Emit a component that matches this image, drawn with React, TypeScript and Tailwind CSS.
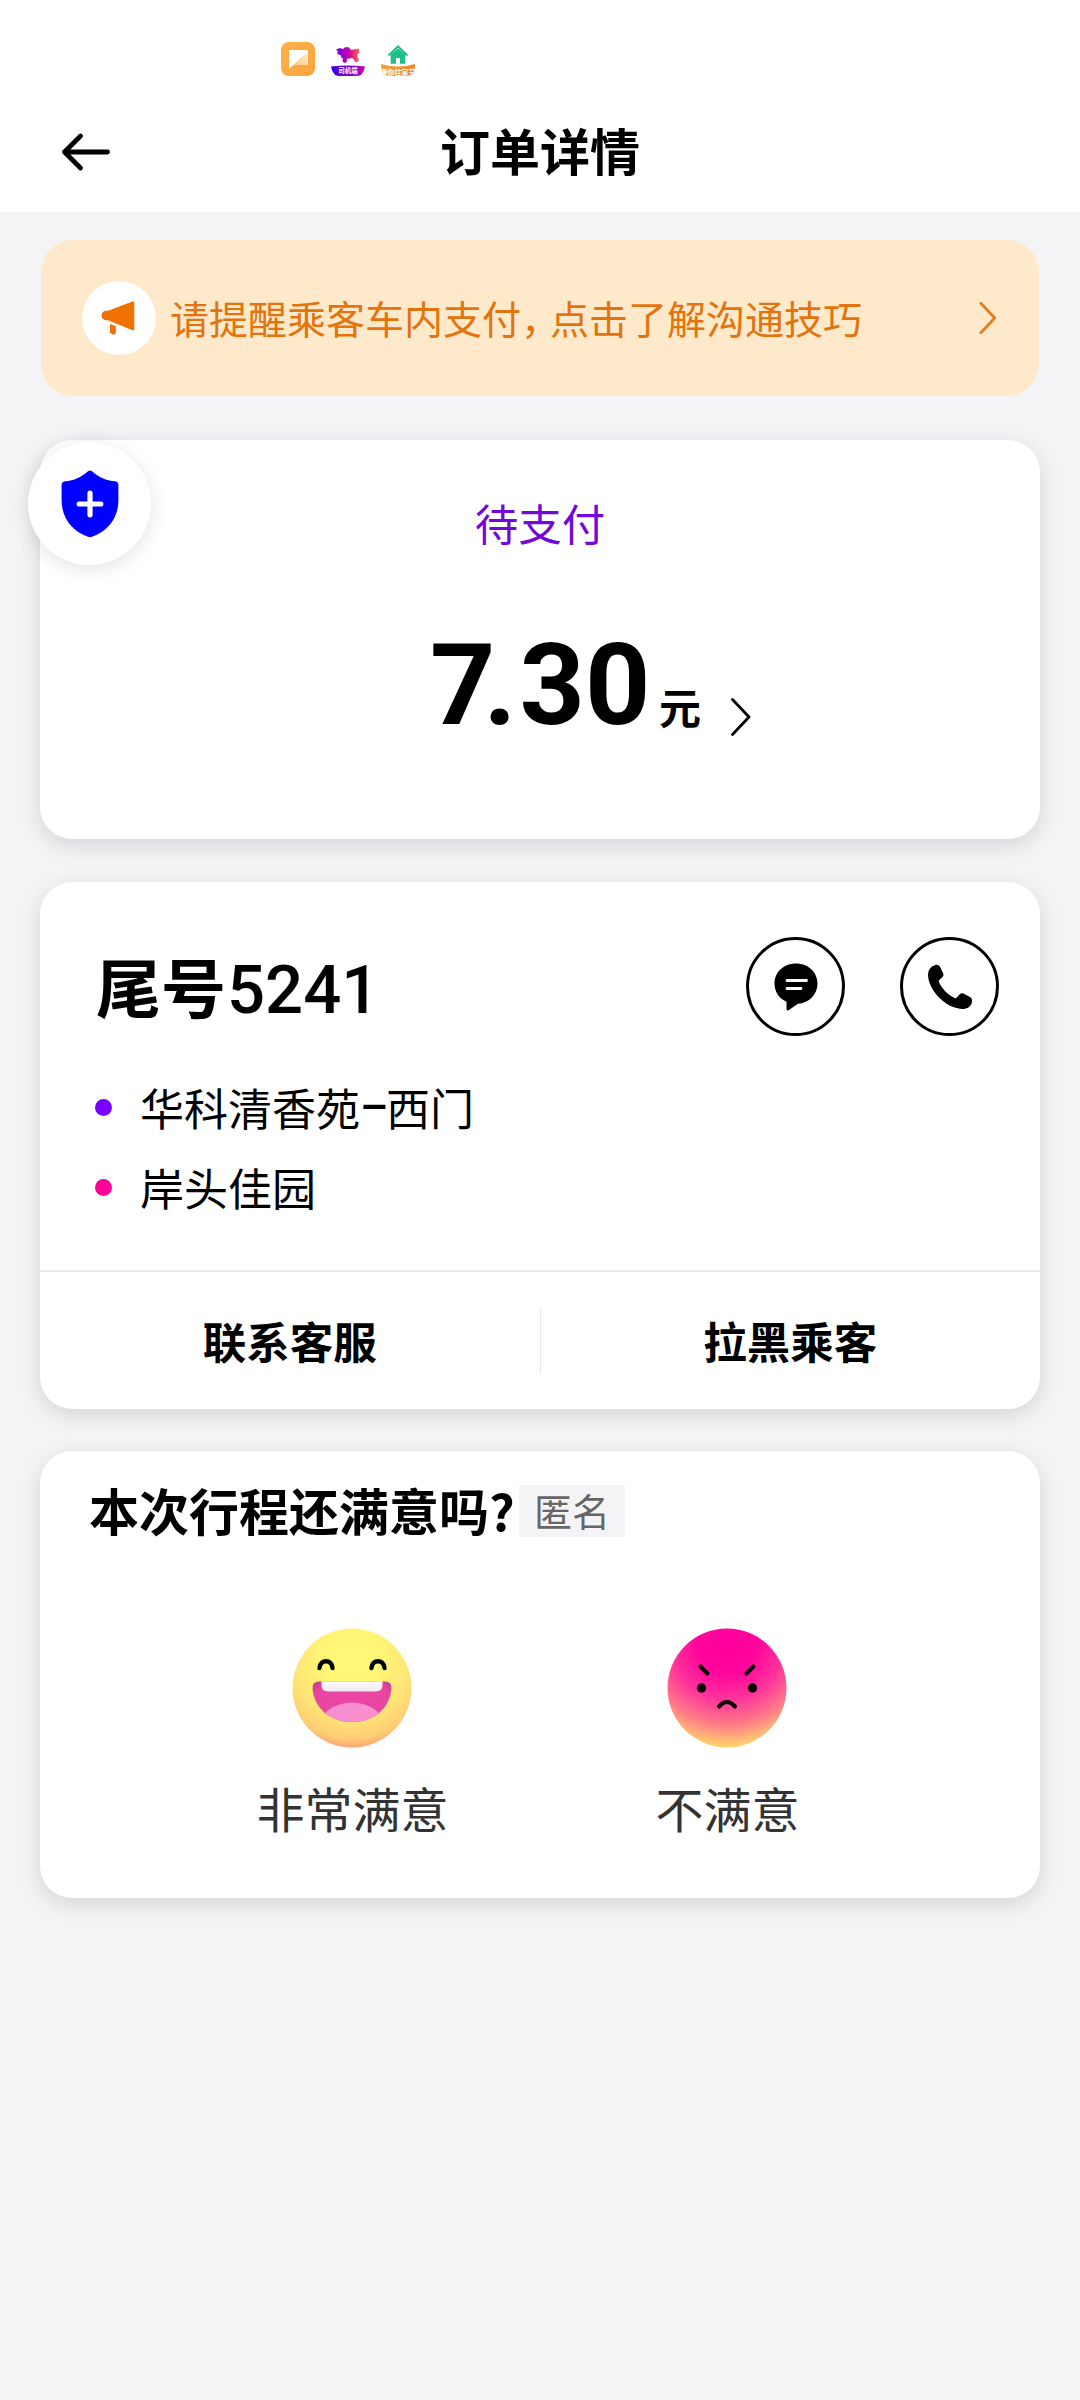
import React from "react";

const CHEVRON = "M1.5 1.5 L18 19 L1.5 36.5";

function Shield() {
  return (
    <svg width="58" height="68" viewBox="0 0 58 68" className="block">
      <path
        d="M27 1.2 Q29 -.4 31 1.2 C38 7.5 45 10.5 54 11.3 Q57.4 11.7 57.4 15 V30 C57.4 48 47 61 31 66.8 Q29 67.5 27 66.8 C11 61 .6 48 .6 30 V15 Q.6 11.7 4 11.3 C13 10.5 20 7.5 27 1.2Z"
        fill="#0000ff"
      />
      <path d="M29 23.2 V44.8 M18.2 34 H39.8" stroke="#fff" strokeWidth="5.2" strokeLinecap="round" />
    </svg>
  );
}

function StatusIcons() {
  return (
    <div className="flex h-[92px] gap-4 pt-[42px] pl-[281px]">
      <svg width="34" height="34" viewBox="0 0 34 34">
        <defs>
          <linearGradient id="note" x1="0" y1="0" x2="1" y2="1">
            <stop offset="0" stopColor="#fdb04a" />
            <stop offset="1" stopColor="#fba43c" />
          </linearGradient>
          <linearGradient id="noteFold" x1="0" y1="1" x2="1" y2="0">
            <stop offset="0" stopColor="#fdc880" />
            <stop offset="1" stopColor="#fff0da" />
          </linearGradient>
        </defs>
        <rect width="34" height="34" rx="8" fill="url(#note)" />
        <path d="M9.500 8 H25.500 Q27 8 27 9.500 V9.700 L8.200 27 V9.300 Q8.200 8 9.500 8Z" fill="#fff" />
        <path d="M27 9.700 V21.500 Q27 23 25.500 23 H12.500 Z" fill="url(#noteFold)" />
      </svg>
      <svg width="34" height="34" viewBox="0 0 34 34">
        <defs>
          <linearGradient id="horse" x1="0" y1="0" x2="1" y2="0">
            <stop offset="0" stopColor="#6a00f4" />
            <stop offset=".6" stopColor="#d3089a" />
            <stop offset="1" stopColor="#ff6a4a" />
          </linearGradient>
          <linearGradient id="band" x1="0" y1="0" x2="1" y2="0">
            <stop offset="0" stopColor="#3200e6" />
            <stop offset="1" stopColor="#c400b4" />
          </linearGradient>
        </defs>
        <path
          d="M5 7.500 L9 6 L12 7 L14 5.200 L18 5.200 L20 8 L28 6.500 L28.500 11 L26.500 12 L26.500 15.500 A2.400 2.400 0 1 1 23 17.500 L21 16 L15.500 17 A2.300 2.300 0 1 1 11.500 18.500 L12 16.500 L10.500 16 L9.500 13 L6 12 L7 9.500Z"
          fill="url(#horse)"
        />
        <path d="M0 24.500 Q17 22.500 34 24.500 Q33.500 29 30 33 Q28 34 25 34 H9 Q6 34 4 33 Q.5 29 0 24.500Z" fill="url(#band)" />
        <text x="17" y="31" fontSize="6.500" fontWeight="700" textAnchor="middle" fill="#fff">司机端</text>
      </svg>
      <svg width="34" height="34" viewBox="0 0 34 34">
        <defs>
          <linearGradient id="wave" x1="0" y1="0" x2="1" y2="0">
            <stop offset="0" stopColor="#f5a43a" />
            <stop offset="1" stopColor="#e8862e" />
          </linearGradient>
        </defs>
        <path d="M17 6.500 L24.300 12.500 V21.800 H19 V16 H15 V21.800 H9.700 V12.500Z" fill="#1dbf8a" />
        <path d="M7.500 13.500 L17 4.500 L26.500 13.500" fill="none" stroke="#1dbf8a" strokeWidth="2" />
        <path d="M0 22 Q17 27 34 22 Q34.500 34 26 34 H8 Q-.5 34 0 22Z" fill="url(#wave)" />
        <text x="17" y="32.500" fontSize="7" fontWeight="700" textAnchor="middle" fill="#fff">便你住家节</text>
      </svg>
    </div>
  );
}

function HappyFace() {
  return (
    <svg width="120" height="120" viewBox="0 0 120 120" className="mr-px block">
      <defs>
        <radialGradient id="happy" cx=".5" cy=".27" r=".75">
          <stop offset="0" stopColor="#fffb78" />
          <stop offset=".35" stopColor="#fff575" />
          <stop offset=".65" stopColor="#ffe576" />
          <stop offset=".88" stopColor="#fecc74" />
          <stop offset="1" stopColor="#ff9a72" />
        </radialGradient>
        <linearGradient id="teeth" x1="0" y1="0" x2="0" y2="1">
          <stop offset="0" stopColor="#fff" />
          <stop offset="1" stopColor="#eee6f2" />
        </linearGradient>
        <radialGradient id="mouth" cx=".5" cy=".4" r=".6">
          <stop offset="0" stopColor="#ee46a6" />
          <stop offset=".75" stopColor="#e8459f" />
          <stop offset="1" stopColor="#c83a8e" />
        </radialGradient>
        <clipPath id="mouthClip">
          <path d="M27 53.500 H93 Q99.500 53.500 99.500 60 C98 81 81 94 60 94 C39 94 22 81 20.500 60 Q20.500 53.500 27 53.500Z" />
        </clipPath>
      </defs>
      <circle cx="60" cy="60" r="59.500" fill="url(#happy)" />
      <path d="M27.500 40 C28 31 40 31 40.500 40 M79.500 40 C80 31 92 31 92.500 40" fill="none" stroke="#000" strokeWidth="4.400" strokeLinecap="round" />
      <g clipPath="url(#mouthClip)">
        <rect x="20" y="53" width="80" height="42" fill="url(#mouth)" />
        <ellipse cx="60" cy="96" rx="31" ry="21.500" fill="#f98fd0" />
        <path d="M29.500 53 H90.500 V57 Q90.500 63.500 84 63.500 H36 Q29.500 63.500 29.500 57Z" fill="url(#teeth)" />
      </g>
    </svg>
  );
}

function AngryFace() {
  return (
    <svg width="120" height="120" viewBox="0 0 120 120" className="mr-px block">
      <defs>
        <radialGradient id="angry" cx=".5" cy=".12" r=".88">
          <stop offset="0" stopColor="#ff009c" />
          <stop offset=".3" stopColor="#ff069c" />
          <stop offset=".55" stopColor="#ff359a" />
          <stop offset=".78" stopColor="#ff7a88" />
          <stop offset="1" stopColor="#ffd76c" />
        </radialGradient>
      </defs>
      <circle cx="60" cy="60" r="59.500" fill="url(#angry)" />
      <path d="M33.500 38.500 L40.500 45.500 M86.500 38.500 L79.500 45.500 M52 78.500 Q60 69.500 68 78.500" fill="none" stroke="#0c0006" strokeWidth="4.200" strokeLinecap="round" />
      <circle cx="34.500" cy="60" r="4.700" fill="#0c0006" />
      <circle cx="85.500" cy="60" r="4.700" fill="#0c0006" />
    </svg>
  );
}

const CARD = "rounded-[32px] bg-white shadow-[0_6px_22px_rgba(0,0,0,0.13)]";

export default function App() {
  return (
    <div className="h-[2400px] w-[1080px] overflow-hidden bg-[#f4f4f7] font-['Noto_Sans_CJK_SC',sans-serif] text-black">
      <header className="h-[212px] bg-white">
        <StatusIcons />
        <div className="flex h-[120px] items-center pl-[61px]">
          <svg width="50" height="40" viewBox="0 0 50 40" fill="none" stroke="#000" strokeWidth="4.800" strokeLinecap="round" strokeLinejoin="round">
            <path d="M19.500 4 L3.500 20 L19.500 36 M3.500 20 H46.500" />
          </svg>
          <h1 className="ml-[329px] pb-[6px] text-[50px] leading-[60px] font-bold">订单详情</h1>
        </div>
      </header>

      <main className="px-10 pt-7">
        <section className="mx-px flex h-[156px] items-center rounded-[32px] bg-[#feeacb] pl-[41px] text-[39px] text-[#e3730c]">
          <span className="flex size-[74px] items-center justify-center rounded-full bg-white">
            <svg className="mr-[3px]" width="34" height="34" viewBox="0 0 34 34" fill="#f07000">
              <path d="M7 9.800 L31.500 .6 Q33.300 0 33.300 2 V28 Q33.300 30 31.500 29.300 L7 19.300 H5 Q.6 18.500 .6 14.500 Q.6 10.500 5 9.800Z" />
              <path d="M9 23 L14.800 25 V31.500 Q14.800 34 12.500 33.500 L10.300 32.800 Q9 32.300 9 31Z" />
            </svg>
          </span>
          <p className="ml-[14px] w-[690px] pb-[3px] leading-[56px] whitespace-nowrap">
            请提醒乘客车内支付<span className="tracking-[-10px]">，</span>点击了解沟通技巧
          </p>
          <svg className="ml-[119px]" width="18" height="32" viewBox="0 0 20 38" fill="none" stroke="#e67a1c" strokeWidth="3.200" strokeLinecap="round" strokeLinejoin="round">
            <path d={CHEVRON} />
          </svg>
        </section>

        <section className={`${CARD} relative mt-11 h-[399px]`}>
          <div className="absolute top-[2px] -left-3 flex size-[123px] items-center justify-center rounded-full bg-white shadow-[0_4px_20px_rgba(0,0,0,0.11)]">
            <Shield />
          </div>
          <p className="pt-[51px] text-center text-[43.500px] leading-[64px] text-[#7208dc]">待支付</p>
          <div className="flex h-[160px] items-start pt-[63px] pl-[390px]">
            <span className="w-[216px] font-['Roboto'] text-[114px] leading-[134px] font-bold whitespace-nowrap">
              <span className="tracking-[-12px]">7</span>
              <span className="tracking-[3px]">.</span>30
            </span>
            <span className="mt-[58px] ml-[13px] text-[42px] leading-[60px] font-bold">元</span>
            <svg className="mt-[80px] ml-[30px]" width="20" height="40" viewBox="0 0 20 40" fill="none" stroke="#000" strokeWidth="2.800" strokeLinecap="round" strokeLinejoin="round">
              <path d={CHEVRON} />
            </svg>
          </div>
        </section>

        <section className={`${CARD} mt-[43px] h-[527px]`}>
          <div className="flex h-[154px] items-start pt-[55px]">
            <h2 className="flex w-[648px] pl-[56px] text-[65px] leading-[96px] font-bold">
              <span>尾号</span>
              <span className="ml-px pt-[5px] font-['Roboto'] text-[67px] font-medium">5241</span>
            </h2>
            <span className="ml-[58px] flex size-[99px] items-center justify-center rounded-full border-3 border-black">
              <svg width="44" height="48" viewBox="0 0 44 48">
                <path d="M22 .5 C34 .5 43.500 9 43.500 20.500 C43.500 31.500 35 40 24 40.800 L14.500 47.300 Q12.500 48 12.500 46 V38.700 C5 35.500 .5 28.500 .5 20.500 C.5 9 10 .5 22 .5Z" />
                <path d="M13 17.500 H32.500 M13 25.500 H27" stroke="#fff" strokeWidth="2.800" strokeLinecap="round" />
              </svg>
            </span>
            <span className="ml-[55px] flex size-[99px] items-center justify-center rounded-full border-3 border-black">
              <svg width="46" height="46" viewBox="0 0 46 46">
                <path d="M5 2.500 L9 .8 Q11.500 .3 12.800 2.500 L16.300 9.500 Q17 11.500 15.500 13 L11.500 16.800 C14 24 20.500 31 28.800 34.500 L33 30 Q34.500 28.700 36.500 29.600 L43 33 Q45.500 34.500 45 37.500 C44.500 42.500 40.500 45 35 45 C18 44 1.500 26 1 11 Q1 5.500 5 2.500Z" />
              </svg>
            </span>
          </div>
          <ul className="mt-[31px] pl-[55px] text-[44px] leading-[80px]">
            <li className="flex items-center">
              <span className="mr-[28px] size-[17px] rounded-full bg-[#7a00ff]" />
              华科清香苑<span className="w-[26px] pt-[3px] text-center font-['Roboto'] leading-[77px] font-medium">–</span>西门
            </li>
            <li className="flex items-center">
              <span className="mr-[28px] size-[17px] rounded-full bg-[#ff0099]" />
              岸头佳园
            </li>
          </ul>
          <div className="mt-[43px] flex h-[139px] items-center border-t-2 border-[#e9e9e9] text-[43.500px] font-bold">
            <span className="flex-1 text-center">联系客服</span>
            <span className="h-[66px] w-px bg-[#e6e6e6]" />
            <span className="flex-1 text-center">拉黑乘客</span>
          </div>
        </section>

        <section className={`${CARD} mt-[42px] h-[447px]`}>
          <div className="flex items-start pt-[34px] pl-[49px]">
            <h2 className="-mt-[4px] w-[430px] text-[50px] leading-[56px] font-bold whitespace-nowrap">本次行程还满意吗?</h2>
            <span className="flex h-[52px] w-[106px] items-center justify-center bg-[#f4f4f7] pb-[3px] text-[38px] text-[#666]">匿名</span>
          </div>
          <div className="mt-[91px] flex pl-[125px] text-[48px] leading-[70px] text-[#333]">
            <div className="flex w-[375px] flex-col items-center gap-[24px]">
              <HappyFace />
              <span>非常满意</span>
            </div>
            <div className="flex w-[375px] flex-col items-center gap-[24px]">
              <AngryFace />
              <span>不满意</span>
            </div>
          </div>
        </section>
      </main>
    </div>
  );
}
